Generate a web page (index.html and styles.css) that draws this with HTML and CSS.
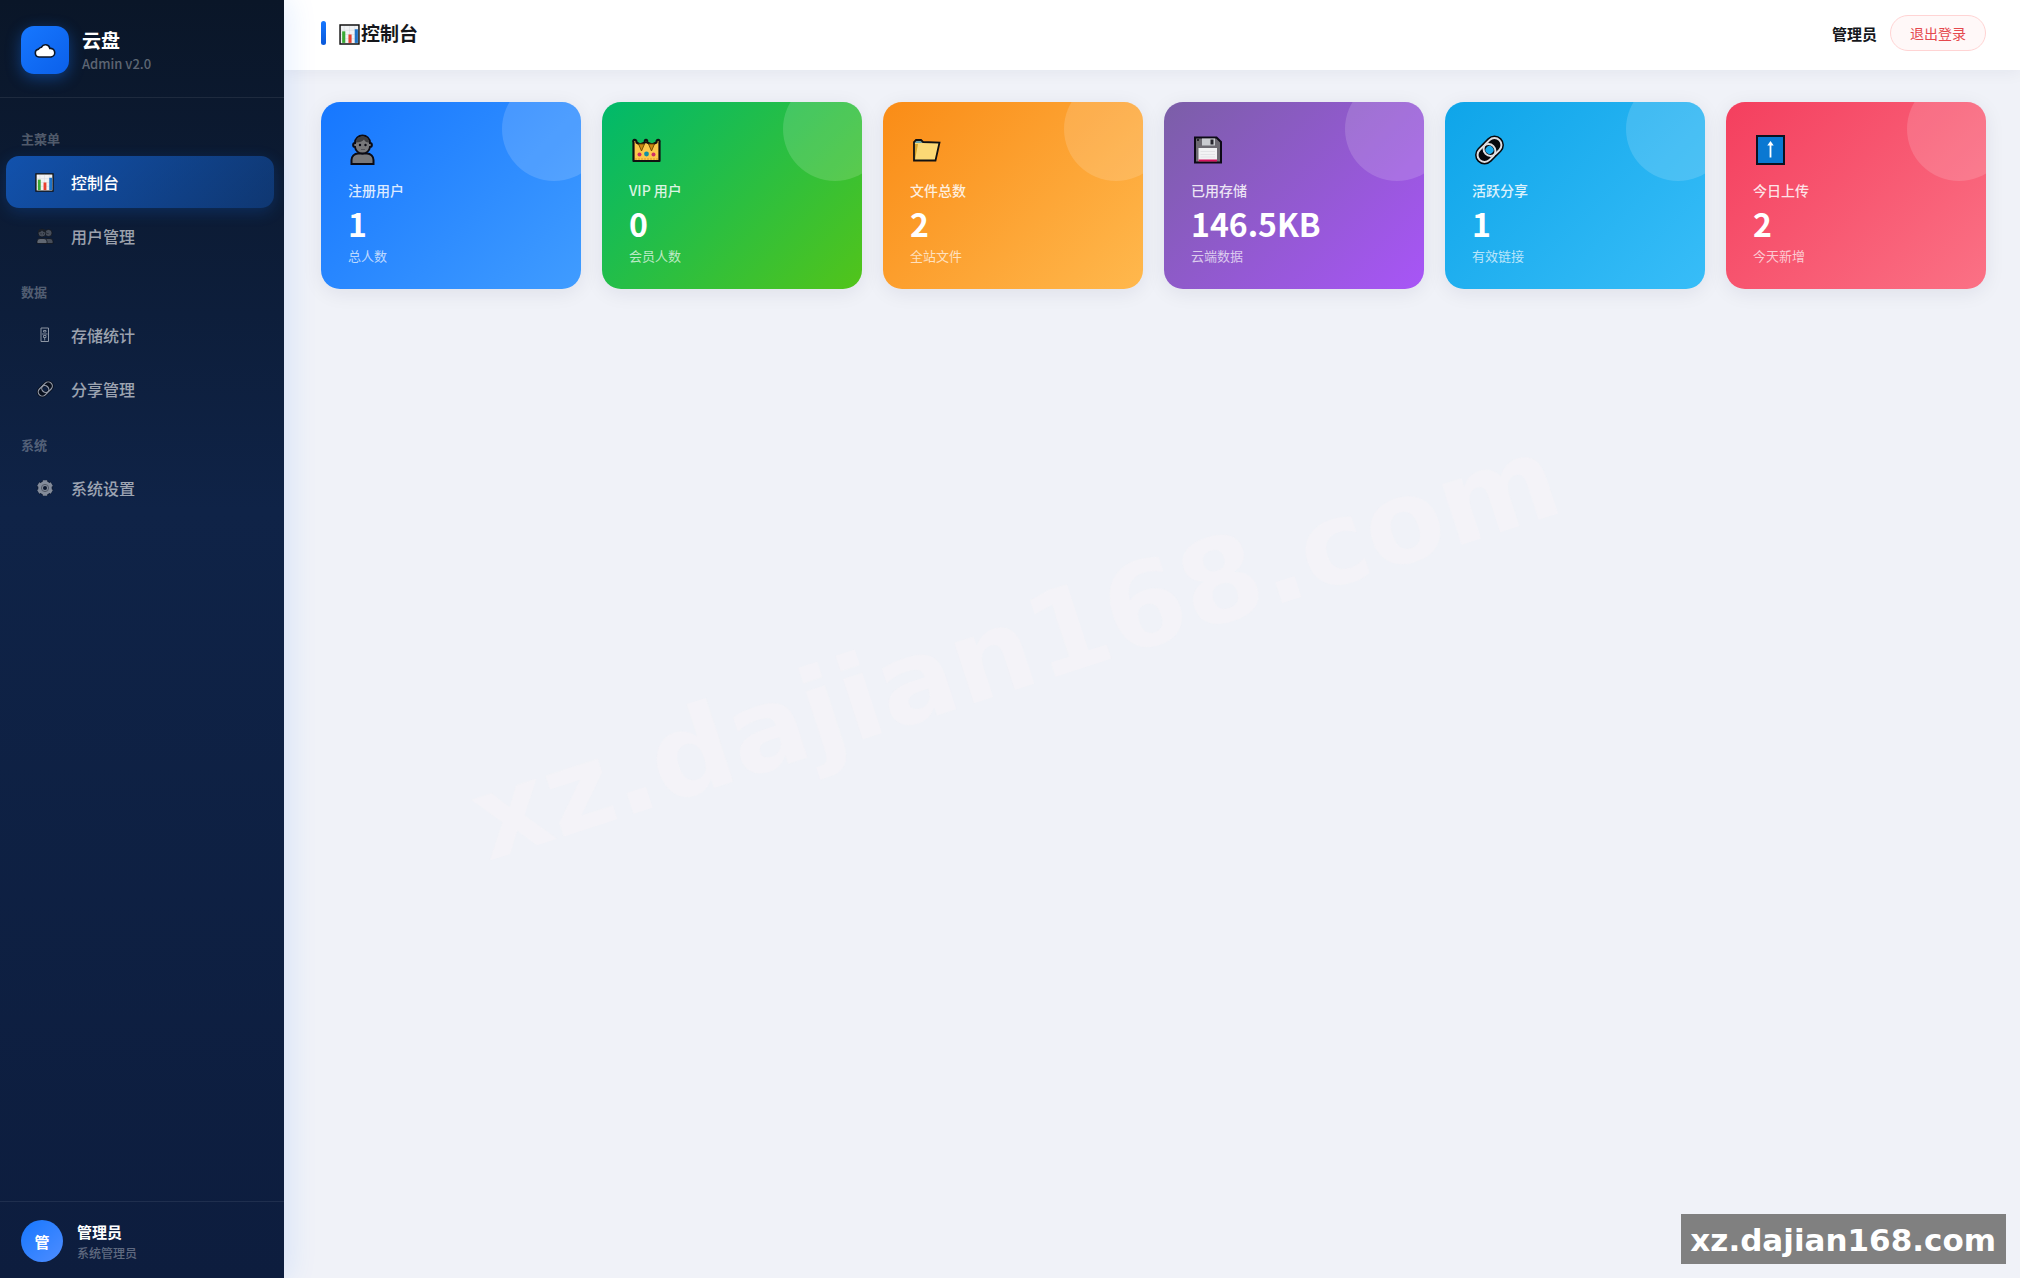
FILE: index.html
```html
<!DOCTYPE html>
<html lang="zh-CN">
<head>
<meta charset="utf-8">
<meta name="viewport" content="width=device-width, initial-scale=1">
<title>云盘 - 控制台</title>
<link rel="stylesheet" href="styles.css">
</head>
<body>
<svg class="sprite" aria-hidden="true">
  <symbol id="chart" viewBox="0 0 20 20">
    <path d="M1 1h18v18H1z" fill="#f1f3f5" stroke="#111" stroke-width="1.4"/>
    <path d="M5 2v16M10 2v16M15 2v16M2 6h16M2 10h16M2 14h16" stroke="#d5d9dd" stroke-width=".5"/>
    <path d="M3 7h3v11H3z" fill="#3aaa35"/>
    <path d="M9 10h3v8H9z" fill="#e8402f"/>
    <path d="M15 5h3v13h-3z" fill="#1e73c8"/>
  </symbol>
  <symbol id="links" viewBox="0 0 34 34">
    <g transform="translate(17.500 17) rotate(-45)">
      <path class="link-base" fill-rule="evenodd" d="M-7-9.500H7a9.500 9.500 0 0 1 0 19H-7a9.500 9.500 0 0 1 0-19zM0-4a4 4 0 1 0 0 8 4 4 0 0 0 0-8z"/>
      <rect class="link-line" x="-14" y="-7" width="19.500" height="14" rx="7"/>
      <rect class="link-line" x="-5.500" y="-7" width="19.500" height="14" rx="7"/>
    </g>
  </symbol>
</svg>

<div class="app">
  <aside class="sidebar">
    <div class="brand">
      <div class="brand-logo">
        <svg width="22" height="16" viewBox="0 0 22 16" aria-hidden="true"><path d="M5 14a4 4 0 0 1-.5-7.900A3.500 3.500 0 0 1 7.500 4.200a4.400 4.400 0 0 1 8.300 1.200A4.300 4.300 0 0 1 17 14z" fill="#fff" stroke="#0b1526" stroke-width="1.600"/></svg>
      </div>
      <div class="brand-text">
        <div class="brand-name">云盘</div>
        <div class="brand-version">Admin v2.0</div>
      </div>
    </div>

    <nav class="nav">
      <div class="nav-label">主菜单</div>
      <a class="nav-item active" href="#dashboard">
        <span class="nav-icon"><svg width="19" height="19" aria-hidden="true"><use href="#chart"/></svg></span>控制台
      </a>
      <a class="nav-item" href="#users">
        <span class="nav-icon"><svg width="18" height="18" viewBox="0 0 18 18" aria-hidden="true">
          <g stroke="#111" stroke-width=".8" fill="#66686c"><circle cx="12.500" cy="6" r="3.600"/><path d="M8 16.500v-2a3 3 0 0 1 3-3h3a3 3 0 0 1 3 3v2z"/><circle cx="6" cy="6" r="4"/><path d="M1 16.500v-2a3 3 0 0 1 3-3h4a3 3 0 0 1 3 3v2z" fill="#8d8f92"/></g>
          <path d="M2 5.500c0-5 8-5 8 0-2 0-3-1-4-2-1 1-2 2-4 2z" fill="#222"/><path d="M4.600 6.800h.8M7 6.800h.8M11.500 6.500h.8" stroke="#111"/>
        </svg></span>用户管理
      </a>
      <div class="nav-label">数据</div>
      <a class="nav-item" href="#storage">
        <span class="nav-icon"><svg width="10" height="16" viewBox="0 0 10 16" aria-hidden="true" fill="none" stroke="#d0d4da"><path d="M1 1h7.500v13.500H1z"/><path d="M3.500 3.500h2.500v1.500H3.500zM2 7h5.500M3.500 8.500h2.500v2H3.500zM4.700 10.500v3" stroke-width=".9"/></svg></span>存储统计
      </a>
      <a class="nav-item" href="#shares">
        <span class="nav-icon"><svg width="20" height="20" aria-hidden="true"><use href="#links"/></svg></span>分享管理
      </a>
      <div class="nav-label">系统</div>
      <a class="nav-item" href="#settings">
        <span class="nav-icon"><svg width="18" height="18" viewBox="0 0 18 18" aria-hidden="true">
          <g transform="translate(9 9)"><g stroke="#0a1222" stroke-width="5.500"><path d="M0-8v16M-7-4l14 8M-7 4l14-8"/></g><circle r="7.500" fill="#0a1222"/><g stroke="#c2c4c8" stroke-width="4.400"><path d="M0-7.800v15.600M-6.800-3.900l13.600 7.800M-6.800 3.900l13.600-7.800"/></g><circle r="6.800" fill="#c2c4c8"/><circle r="3.600" fill="none" stroke="#777" stroke-width="1"/><circle r="2" fill="#0a1222"/></g>
        </svg></span>系统设置
      </a>
    </nav>

    <div class="account">
      <div class="avatar">管</div>
      <div>
        <div class="account-name">管理员</div>
        <div class="account-role">系统管理员</div>
      </div>
    </div>
  </aside>

  <main class="main">
    <header class="topbar">
      <h1 class="page-title"><svg width="21" height="21" aria-hidden="true"><use href="#chart"/></svg>控制台</h1>
      <div class="topbar-user">
        <span class="topbar-name">管理员</span>
        <button class="logout" type="button">退出登录</button>
      </div>
    </header>

    <section class="stats">
      <article class="card card-blue">
        <div class="card-icon"><svg width="34" height="34" viewBox="0 0 34 34" aria-hidden="true">
          <path d="M3.500 31v-4a6.500 6.500 0 0 1 6.500-6.500h9a6.500 6.500 0 0 1 6.500 6.500v4z" fill="#78787a" stroke="#0b0b14" stroke-width="2"/>
          <path d="M7 10c0-10 15-10 15 0 2.500 0 2.500 4 0 4-1 8.500-14 8.500-15 0-2.500 0-2.500-4 0-4z" fill="#78787a" stroke="#0b0b14" stroke-width="2"/>
          <path d="M8 9.500C8 1 21 1 21 9.500c-3 0-4-1-5-3-1.500 2-4 3-8 3z" fill="#3d3d40"/>
          <circle cx="12" cy="12" r="1.200" fill="#0b0b14"/><circle cx="17.500" cy="12" r="1.200" fill="#0b0b14"/><path d="M13 16.500h4" stroke="#55555a"/>
        </svg></div>
        <div class="card-label">注册用户</div>
        <div class="card-value">1</div>
        <div class="card-note">总人数</div>
      </article>
      <article class="card card-green">
        <div class="card-icon"><svg width="34" height="34" viewBox="0 0 34 34" aria-hidden="true">
          <path d="M4.500 28V9.500c-1.500-3.500 3.500-3.500 3 0l3.500 2 5-2c-1.500-3.500 3.500-3.500 2 0l5 2 4.500-2c-.5-3.500 4-3.500 3 0V28z" fill="#fcc84a" stroke="#111" stroke-width="2.200" stroke-linejoin="round"/>
          <path d="M9.500 11l3 7 3-7zM19.500 11l3 7 3-7z" fill="#c98712" stroke="#6b4600" stroke-width=".9"/>
          <path d="M6 26h24" stroke="#d9962a" stroke-dasharray="2 1"/>
          <circle cx="10.500" cy="21.500" r="2" fill="#cf2f64"/><circle cx="17.500" cy="21" r="2.400" fill="#128fa3"/><circle cx="24.500" cy="21.500" r="2" fill="#cf2f64"/>
        </svg></div>
        <div class="card-label">VIP 用户</div>
        <div class="card-value">0</div>
        <div class="card-note">会员人数</div>
      </article>
      <article class="card card-orange">
        <div class="card-icon"><svg width="34" height="34" viewBox="0 0 34 34" aria-hidden="true">
          <path d="M4 27.500V9l2-2h5l2 2h17l-4.500 18.500z" fill="#fbd875"/>
          <path d="M5 9l1.500-1.500h4l2 2.500H5z" fill="#6ea6ad"/><path d="M4.500 11H8L5 27z" fill="#d6a42c"/>
          <path d="M4 27.500V9l2-2h5l2 2 16.500.500-4 18z" fill="none" stroke="#111" stroke-width="1.800"/>
        </svg></div>
        <div class="card-label">文件总数</div>
        <div class="card-value">2</div>
        <div class="card-note">全站文件</div>
      </article>
      <article class="card card-purple">
        <div class="card-icon"><svg width="34" height="34" viewBox="0 0 34 34" aria-hidden="true">
          <path d="M4 4.500h21.500L30 9v20.500H4z" fill="#6d6a72" stroke="#0d0a16" stroke-width="2"/>
          <path d="M11 5.500h13v7H11z" fill="#c9cbd0"/><path d="M19.500 6.500h3v5h-3z" fill="#26242c"/>
          <path d="M7.500 15h18.500v13H7.500z" fill="#f2f2f4"/><path d="M9.500 18.500h14.500M9.500 21.500h14.500M9.500 24h14.500" stroke="#dcdce0" stroke-width=".7"/><path d="M7.500 26.500h18.500v2H7.500z" fill="#d5105e"/><path d="M6 6h2v2H6z" fill="#26242c"/>
        </svg></div>
        <div class="card-label">已用存储</div>
        <div class="card-value">146.5KB</div>
        <div class="card-note">云端数据</div>
      </article>
      <article class="card card-cyan">
        <div class="card-icon"><svg width="34" height="34" aria-hidden="true"><use href="#links"/></svg></div>
        <div class="card-label">活跃分享</div>
        <div class="card-value">1</div>
        <div class="card-note">有效链接</div>
      </article>
      <article class="card card-red">
        <div class="card-icon"><svg width="34" height="34" viewBox="0 0 34 34" aria-hidden="true">
          <path d="M4 3h27v28H4z" fill="#0a78d2" stroke="#0b1220" stroke-width="2"/>
          <path d="M17.500 24.500V10" stroke="#fff" stroke-width="1.800"/><path d="M14.300 12.500 17.500 8l3.200 4.500z" fill="#fff"/>
        </svg></div>
        <div class="card-label">今日上传</div>
        <div class="card-value">2</div>
        <div class="card-note">今天新增</div>
      </article>
    </section>
  </main>
</div>

<div class="watermark">xz.dajian168.com</div>
<div class="site-tag">xz.dajian168.com</div>
</body>
</html>
```
FILE: styles.css
```css
* {
  box-sizing: border-box;
}

body {
  margin: 0;
  background: #f0f2f8;
  color: #15171c;
  font-family: "Noto Sans CJK SC", sans-serif;
  font-size: 16px;
}

.sprite {
  position: absolute;
  width: 0;
  height: 0;
}

svg {
  display: block;
  overflow: visible;
}

.app {
  display: flex;
  min-height: 100vh;
}

/* Sidebar */
.sidebar {
  position: relative;
  z-index: 2;
  display: flex;
  flex: 0 0 284px;
  flex-direction: column;
  background: linear-gradient(180deg, #0a1628 0%, #0f2347 40%, #0d1d3e 100%);
  box-shadow: 4px 0 28px rgba(22, 119, 255, 0.12);
  color: #fff;
}

.brand {
  display: flex;
  align-items: center;
  gap: 13px;
  height: 98px;
  padding: 2px 21px 0;
  border-bottom: 1px solid rgba(255, 255, 255, 0.08);
}

.brand-logo {
  display: flex;
  align-items: center;
  justify-content: center;
  width: 48px;
  height: 48px;
  padding-top: 3px;
  border-radius: 13px;
  background: linear-gradient(135deg, #1677ff, #0b60ea);
  box-shadow: 0 4px 15px rgba(22, 119, 255, 0.4);
}

.brand-text {
  padding-top: 4px;
}

.brand-name {
  font-size: 19px;
  font-weight: 700;
  line-height: 24px;
}

.brand-version {
  color: rgba(255, 255, 255, 0.35);
  font-size: 13px;
  font-weight: 500;
  line-height: 24px;
}

.nav {
  flex: 1;
  padding: 13px 10px 13px 6px;
}

.nav-label {
  padding: 18px 15px 6px;
  color: rgba(255, 255, 255, 0.3);
  font-size: 13px;
  font-weight: 700;
  line-height: 20px;
}

.nav-item {
  display: flex;
  align-items: center;
  gap: 13px;
  height: 52px;
  margin: 1px 0 2px;
  padding: 0 25px;
  border-radius: 13px;
  color: rgba(255, 255, 255, 0.6);
  font-weight: 500;
  text-decoration: none;
}

.nav-item.active {
  background: linear-gradient(135deg, rgba(22, 119, 255, 0.6), rgba(22, 119, 255, 0.3));
  box-shadow: 0 4px 16px rgba(22, 119, 255, 0.2);
  color: #fff;
}

.nav-icon {
  display: flex;
  flex: 0 0 27px;
  align-items: center;
  justify-content: center;
  opacity: 0.65;
}

.active .nav-icon {
  opacity: 1;
}

.link-base {
  fill: #07080c;
}

.link-line {
  fill: none;
  stroke: #dedee2;
  stroke-width: 2px;
}

.account {
  display: flex;
  align-items: center;
  gap: 14px;
  height: 77px;
  padding: 2px 21px 0;
  border-top: 1px solid rgba(255, 255, 255, 0.08);
}

.avatar {
  display: flex;
  align-items: center;
  justify-content: center;
  width: 42px;
  height: 42px;
  border-radius: 50%;
  background: linear-gradient(135deg, #1677ff, #4f8dff);
  font-size: 15px;
  font-weight: 700;
}

.account-name {
  padding-top: 2px;
  font-size: 15px;
  font-weight: 700;
  line-height: 22px;
}

.account-role {
  color: rgba(255, 255, 255, 0.35);
  font-size: 12px;
  font-weight: 500;
  line-height: 20px;
}

/* Main column */
.main {
  flex: 1;
  min-width: 0;
}

.topbar {
  display: flex;
  align-items: center;
  justify-content: space-between;
  height: 70px;
  padding: 0 34px 4px 37px;
  background: #fff;
  box-shadow: 0 2px 16px rgba(20, 30, 60, 0.06);
}

.page-title {
  display: flex;
  align-items: center;
  gap: 1px;
  margin: 0;
  font-size: 19px;
  font-weight: 700;
  line-height: 28px;
}

.page-title svg {
  margin-top: 3px;
}

.page-title::before {
  width: 5px;
  height: 24px;
  margin-right: 12px;
  border-radius: 3px;
  background: linear-gradient(180deg, #1677ff, #0958d9);
  content: "";
}

.topbar-user {
  display: flex;
  align-items: center;
  gap: 13px;
}

.topbar-name {
  font-size: 15px;
  font-weight: 700;
}

.logout {
  height: 36px;
  padding: 0 19px;
  border: 1px solid #ffd4d4;
  border-radius: 18px;
  background: #fff8f8;
  color: #e5484d;
  font: inherit;
  font-size: 14px;
}

.stats {
  display: grid;
  grid-template-columns: repeat(6, 1fr);
  gap: 21px;
  padding: 32px 34px 32px 37px;
}

.card {
  position: relative;
  overflow: hidden;
  padding: 27px 27px 23px;
  border-radius: 19px;
  box-shadow: 0 4px 20px rgba(20, 30, 60, 0.08);
  color: #fff;
}

.card::after {
  position: absolute;
  top: -25px;
  right: -25px;
  width: 104px;
  height: 104px;
  border-radius: 50%;
  background: rgba(255, 255, 255, 0.15);
  content: "";
}

.card-blue {
  background: linear-gradient(135deg, #1677ff, #409cff);
}

.card-green {
  background: linear-gradient(135deg, #00b96b, #52c41a);
}

.card-orange {
  background: linear-gradient(135deg, #fa8c16, #ffb84d);
}

.card-purple {
  background: linear-gradient(135deg, #7b5ea7, #a855f7);
}

.card-cyan {
  background: linear-gradient(135deg, #0ea5e9, #38bdf8);
}

.card-red {
  background: linear-gradient(135deg, #f43f5e, #fb7185);
}

.card-icon {
  display: flex;
  align-items: center;
  height: 42px;
  margin-bottom: 9px;
}

.card-label {
  color: rgba(255, 255, 255, 0.85);
  font-size: 14px;
  font-weight: 500;
  line-height: 20px;
}

.card-value {
  margin: 3px 0;
  font-size: 32px;
  font-weight: 700;
  line-height: 40px;
}

.card-note {
  color: rgba(255, 255, 255, 0.7);
  font-size: 13px;
  line-height: 20px;
}

/* Overlays */
.watermark,
.site-tag {
  position: fixed;
  z-index: 5;
  font-family: "DejaVu Sans", sans-serif;
  font-weight: 700;
  white-space: nowrap;
  pointer-events: none;
}

.watermark {
  top: 50%;
  left: 50%;
  padding: 20px 0 0 4px;
  color: rgba(250, 244, 248, 0.4);
  font-size: 115px;
  transform: translate(-50%, -50%) rotate(-18deg);
}

.site-tag {
  right: 14px;
  bottom: 14px;
  padding: 2px 10px 0 9px;
  background: #808080;
  color: #fff;
  font-size: 31px;
  line-height: 48px;
}
```
